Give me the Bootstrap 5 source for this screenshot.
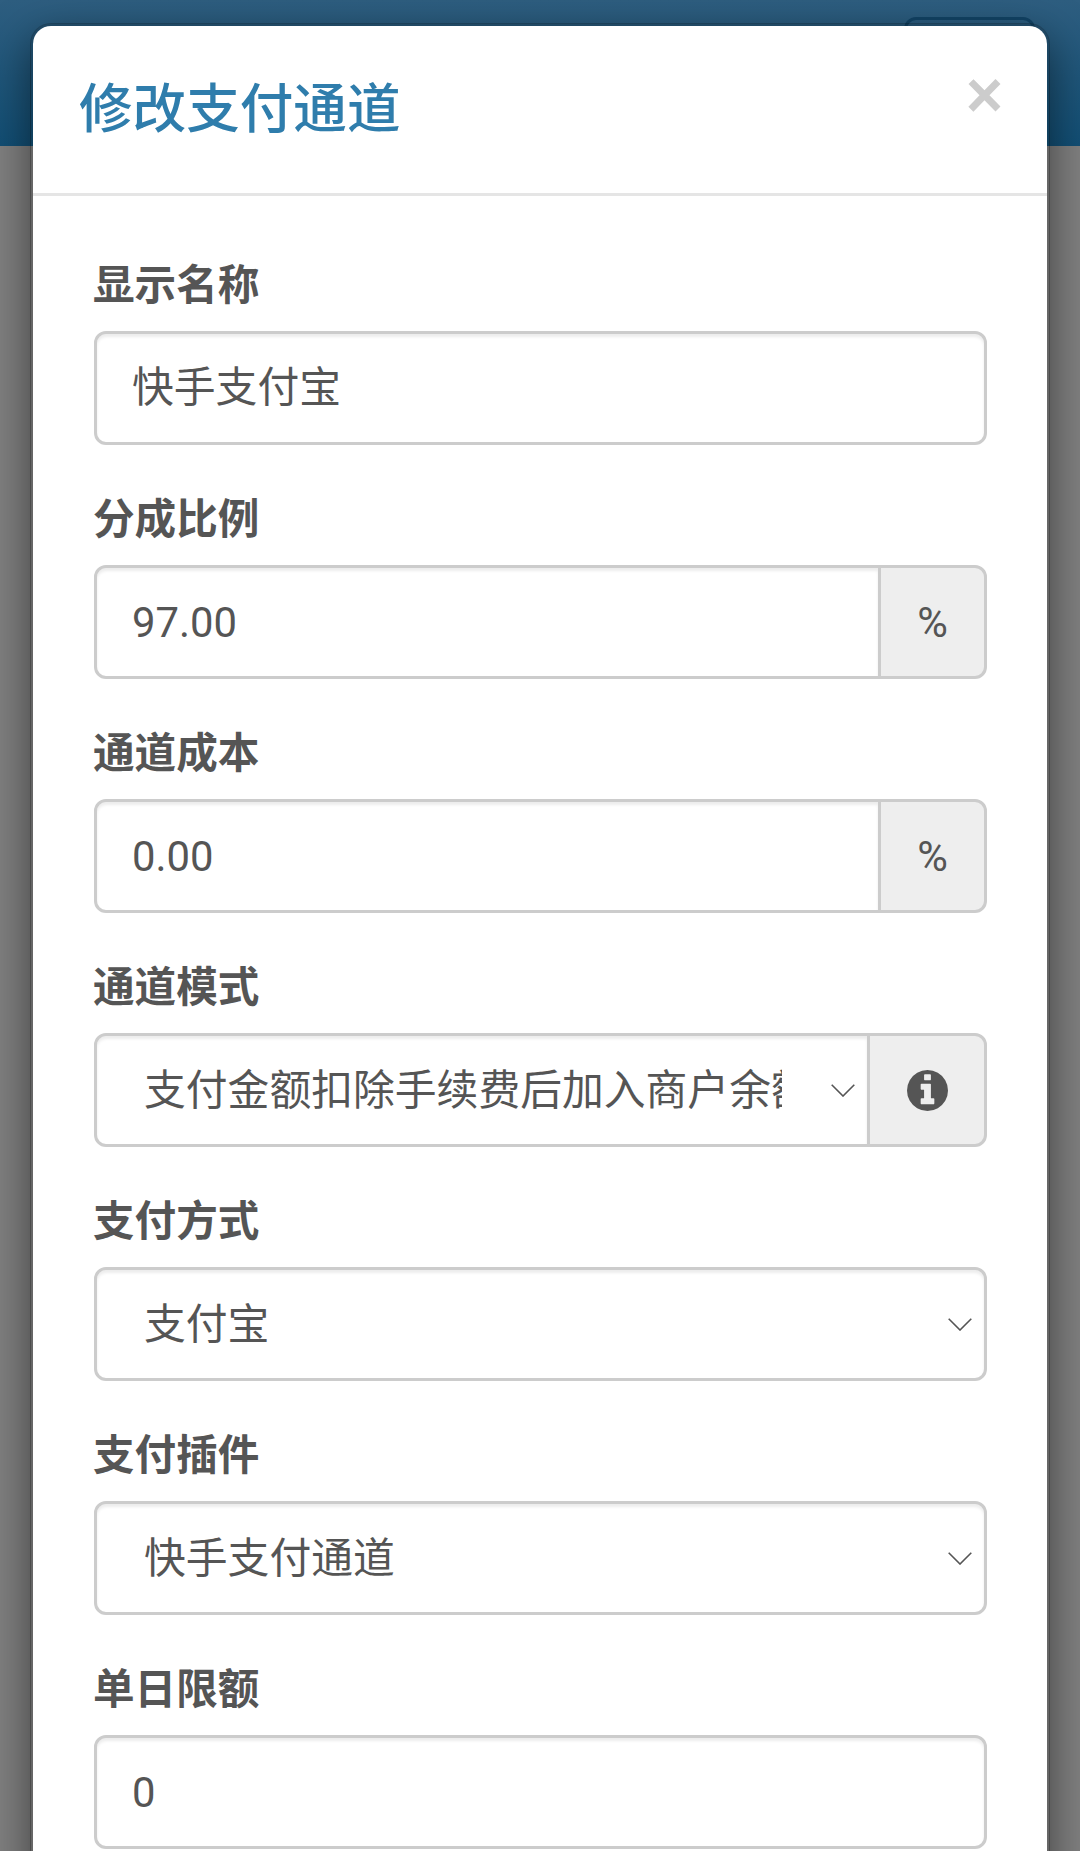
<!DOCTYPE html>
<html lang="zh-CN">
<head>
<meta charset="utf-8">
<title>修改支付通道</title>
<link href="https://cdn.jsdelivr.net/npm/bootstrap@5.3.0/dist/css/bootstrap.min.css" rel="stylesheet">
<style>
html,body{height:1851px;overflow:hidden}
body{background:#808080;font-family:Roboto,"Noto Sans CJK SC",sans-serif;color:#555}
.topbar{height:146px;background:linear-gradient(#2e5e80,#124f75)}
.topbtn{width:131px;height:70px;margin:17px 45px 0 auto;border:3px solid #124466;border-radius:12px}
.sheet{position:absolute;left:30px;top:23px;width:1020px;height:1900px;border:3px solid rgba(0,0,0,.2);border-radius:21px;box-shadow:0 15px 44px rgba(0,0,0,.5);background-clip:padding-box;background-color:#fff;--bs-border-radius-lg:18px;overflow:hidden}
.sheet .modal-header{display:flex;align-items:flex-start;justify-content:space-between;padding:44px 44px 47px;border-bottom:3px solid #e5e5e5;border-radius:0}
.sheet .modal-title{font-size:53.6px;line-height:76px;font-weight:500;color:#2f7dac;margin-left:2px;padding-top:2px;margin-bottom:-2px}
.xclose{background:none;border:0;padding:0;font-family:"Liberation Sans",sans-serif;font-size:64px;line-height:62px;font-weight:700;color:#ccc;margin-top:-6px;margin-right:0}
.sheet .modal-body{padding:58px 60px 0 61px}
.fld{margin-bottom:43px}
.fld .form-label{display:block;font-size:41.6px;line-height:62px;font-weight:700;color:#555;margin:0 0 15px -1px;padding-top:1px;height:62px}
.fld .form-control,.fld .form-select,.fld .input-group-text{height:114px;font-size:41.8px;line-height:59px;color:#555;border:3px solid #ccc;border-radius:12px}
.fld .form-control{padding:0 35px;box-shadow:inset 0 3px 3px rgba(0,0,0,.075)}
.fld .form-control.cjk-val{padding-bottom:8px}
.fld .form-select{padding:0 85px 0 47px;box-shadow:inset 0 3px 3px rgba(0,0,0,.075);background-image:url("data:image/svg+xml,%3csvg xmlns='http://www.w3.org/2000/svg' viewBox='0 0 24 13'%3e%3cpath fill='none' stroke='%23555' stroke-width='1.6' d='M.7.7 12 12 23.3.7'/%3e%3c/svg%3e");background-repeat:no-repeat;background-size:24px 13px;background-position:right 12px center}
.fld .input-group>.form-control,.fld .input-group>.form-select{border-top-right-radius:0;border-bottom-right-radius:0}
.fld .input-group-text{justify-content:center;padding:0;background:#eee;margin-left:-3px!important;border-top-left-radius:0;border-bottom-left-radius:0}
.addon-pct{width:109px}
.addon-info{width:120px}
.info-ic{width:41px;height:41px;fill:#555;display:block}
</style>
</head>
<body>
<div class="topbar d-flex"><div class="topbtn"></div></div>
<div class="sheet modal-content">
  <div class="modal-header">
    <h4 class="modal-title">修改支付通道</h4>
    <button type="button" class="xclose">×</button>
  </div>
  <div class="modal-body">
    <div class="fld">
      <label class="form-label">显示名称</label>
      <input type="text" class="form-control cjk-val" value="快手支付宝">
    </div>
    <div class="fld">
      <label class="form-label">分成比例</label>
      <div class="input-group">
        <input type="text" class="form-control" value="97.00">
        <span class="input-group-text addon-pct">%</span>
      </div>
    </div>
    <div class="fld">
      <label class="form-label">通道成本</label>
      <div class="input-group">
        <input type="text" class="form-control" value="0.00">
        <span class="input-group-text addon-pct">%</span>
      </div>
    </div>
    <div class="fld">
      <label class="form-label">通道模式</label>
      <div class="input-group">
        <select class="form-select"><option>支付金额扣除手续费后加入商户余额</option></select>
        <span class="input-group-text addon-info">
          <svg class="info-ic" viewBox="0 128 1536 1536"><path d="M1024 1376v-160q0-14-9-23t-23-9h-96v-512q0-14-9-23t-23-9h-320q-14 0-23 9t-9 23v160q0 14 9 23t23 9h96v320h-96q-14 0-23 9t-9 23v160q0 14 9 23t23 9h448q14 0 23-9t9-23zm-128-896v-160q0-14-9-23t-23-9h-192q-14 0-23 9t-9 23v160q0 14 9 23t23 9h192q14 0 23-9t9-23zm640 416q0 209-103 385.5t-279.5 279.5-385.5 103-385.5-103-279.5-279.5-103-385.5 103-385.5 279.5-279.5 385.5-103 385.5 103 279.5 279.5 103 385.5z"/></svg>
        </span>
      </div>
    </div>
    <div class="fld">
      <label class="form-label">支付方式</label>
      <select class="form-select"><option>支付宝</option></select>
    </div>
    <div class="fld">
      <label class="form-label">支付插件</label>
      <select class="form-select"><option>快手支付通道</option></select>
    </div>
    <div class="fld">
      <label class="form-label">单日限额</label>
      <input type="text" class="form-control" value="0">
    </div>
  </div>
</div>
<script src="https://cdn.jsdelivr.net/npm/bootstrap@5.3.0/dist/js/bootstrap.bundle.min.js"></script>
</body>
</html>
